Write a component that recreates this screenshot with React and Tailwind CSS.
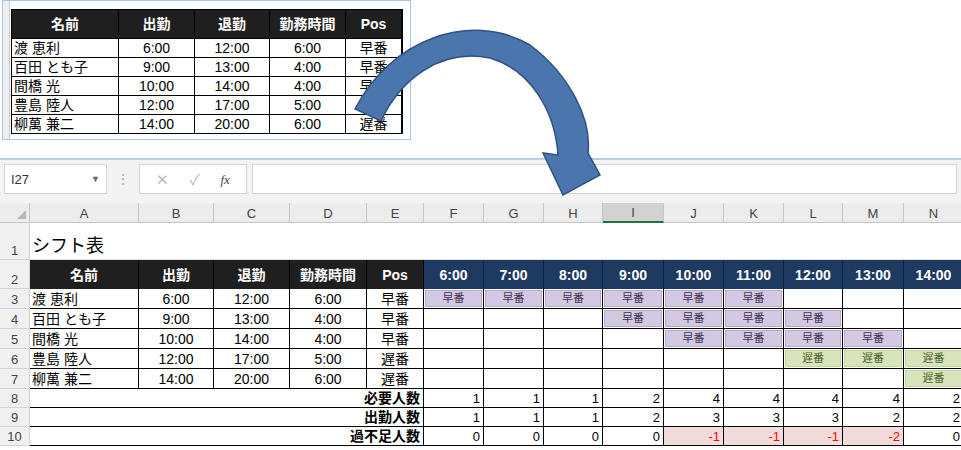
import React from "react";

const F = { fontFamily: '"Liberation Sans","Noto Sans CJK JP",sans-serif' };
const cols = "30px 109px 75px 76px 77px 57px 60px 60px 59px 61px 60px 60px 59px 61px 60px";
const rows = "20px 37px 29px 20px 20px 20px 20px 20px 19px 19px 19px";
const letters = ["A","B","C","D","E","F","G","H","I","J","K","L","M","N"];
const people = [
  ["渡 恵利","6:00","12:00","6:00","早番"],
  ["百田 とも子","9:00","13:00","4:00","早番"],
  ["間橋 光","10:00","14:00","4:00","早番"],
  ["豊島 陸人","12:00","17:00","5:00","遅番"],
  ["柳萬 兼二","14:00","20:00","6:00","遅番"],
];
const hours = ["6:00","7:00","8:00","9:00","10:00","11:00","12:00","13:00","14:00"];
const shifts = [
  [0,1,2,3,4,5],[3,4,5,6],[4,5,6,7],[6,7,8],[8],
];
const need = [1,1,1,2,4,4,4,4,2];
const have = [1,1,1,2,3,3,3,2,2];
const diff = [0,0,0,0,-1,-1,-1,-2,0];

function RowHdr({ n }) {
  return <div className="bg-[#f0f0f0] border-r border-b border-[#d4d4d4] text-[13px] leading-none text-[#444] flex items-end justify-center pb-[2px] overflow-hidden">{n}</div>;
}

export default function App() {
  return (
    <div className="relative w-[961px] h-[450px] bg-white overflow-hidden leading-none" style={F}>
      <div className="h-[158px] pl-[2px]">
        <div className="w-[409px] h-[140px] border border-[#a9c4e8] flex">
          <div className="w-[7px] bg-[#eeeeee] border-r border-[#ccc]" />
          <div className="pt-[8px] pl-[1px]">
            <div className="border border-black">
              <div className="flex bg-[#1f1f1f] text-white font-bold text-[14px] h-[28px]">
                {[["名前",107],["出勤",76],["退勤",75],["勤務時間",76],["Pos",56]].map(([t,w],i)=>(
                  <div key={i} className="flex items-center justify-center border-r border-black" style={{width:w}}>{t}</div>
                ))}
              </div>
              {people.map((p,r)=>(
                <div key={r} className="flex h-[19px] text-[14px] border-t border-black">
                  {p.map((t,i)=>(
                    <div key={i} className={`border-r border-black flex items-center ${i===0?"pl-[2px]":"justify-center"}`} style={{width:[107,76,75,76,56][i]}}>{t}</div>
                  ))}
                </div>
              ))}
            </div>
          </div>
        </div>
      </div>

      <div className="border-t-2 border-[#b7cde8]">
        <div className="bg-[#f3f3f3] h-[38px] flex items-center px-[4px]">
          <div className="w-[103px] h-[30px] bg-white border border-[#d6d6d6] flex items-center justify-between px-[6px] text-[13px] text-[#333]">
            <span>I27</span><span className="text-[9px] text-[#666]">▼</span>
          </div>
          <div className="w-[32px] text-center text-[#aaa] text-[14px]">⋮</div>
          <div className="w-[108px] h-[30px] bg-white border border-[#d6d6d6] flex items-center justify-around px-[6px] text-[#bbb] text-[15px]">
            <span>✕</span><span>✓</span><span className="text-[#444] italic text-[13px]" style={{fontFamily:'"Liberation Serif",serif'}}>fx</span>
          </div>
          <div className="ml-[5px] flex-1 h-[30px] bg-white border border-[#d6d6d6]" />
        </div>
        <div className="h-[5px] bg-[#f3f3f3]" />
        <div className="grid" style={{ gridTemplateColumns: cols, gridTemplateRows: rows }}>
          <div className="bg-[#ececec] border-r border-b border-[#c6c6c6] relative">
            <div className="absolute right-[3px] bottom-[3px] w-0 h-0 border-l-[9px] border-l-transparent border-b-[9px] border-b-[#b5b5b5]" />
          </div>
          {letters.map(l=>(
            <div key={l} className={`text-[13px] text-[#444] flex items-end justify-center pb-[2px] border-r border-b ${l==="I"?"bg-[#d2d2d2] border-b-2 border-b-[#217346] border-r-[#c6c6c6]":"bg-[#ececec] border-[#c6c6c6]"}`}>{l}</div>
          ))}

          <RowHdr n="1" />
          <div className="col-span-14 border-b border-[#e0e0e0] text-[18px] flex items-end pl-[2px] pb-[4px]">シフト表</div>

          <RowHdr n="2" />
          {["名前","出勤","退勤","勤務時間","Pos"].map((t,i)=>(
            <div key={i} className="bg-[#1f1f1f] text-white font-bold text-[14px] flex items-center justify-center border-r border-black">{t}</div>
          ))}
          {hours.map((h,i)=>(
            <div key={i} className="bg-[#1f3a60] text-white font-bold text-[14px] flex items-center justify-center border-r border-[#0f2340]">{h}</div>
          ))}

          {people.map((p,r)=>(
            <React.Fragment key={r}>
              <RowHdr n={String(r+3)} />
              {p.map((t,i)=>(
                <div key={i} className={`border-r border-b border-black text-[14px] flex items-center ${i===0?"pl-[2px]":"justify-center"}`}>{t}</div>
              ))}
              {hours.map((_,c)=>{
                const on = shifts[r].includes(c);
                const late = r>=3;
                return (
                  <div key={c} className="border-r border-b border-black p-[1px]">
                    {on && (
                      <div className={`h-full flex items-center justify-center text-[11px] ${late?"bg-[#d8e4bc] text-[#4f6228] border border-[#c4d79b]":"bg-[#d4c9e2] text-[#3f3151] border border-[#b8a9cf]"}`}>{late?"遅番":"早番"}</div>
                    )}
                  </div>
                );
              })}
            </React.Fragment>
          ))}

          {[["必要人数",need],["出勤人数",have],["過不足人数",diff]].map(([label,vals],r)=>(
            <React.Fragment key={r}>
              <RowHdr n={String(r+8)} />
              <div className="col-span-5 border-r border-b border-black font-bold text-[14px] flex items-center justify-end pr-[3px]">{label}</div>
              {vals.map((v,c)=>{
                const red = r===2 && v<0;
                return <div key={c} className={`border-r border-b border-black text-[13px] flex items-center justify-end pr-[3px] ${red?"bg-[#f2dcdb] text-[#ff0000]":""}`}>{v}</div>;
              })}
            </React.Fragment>
          ))}
        </div>
      </div>

      <svg className="absolute left-0 top-0 pointer-events-none" width="961" height="450">
        <path d="M355,109 C390,40 470,10 530,45 C570,75 592,120 588,153 L600,175 L563,195 L543,153 L558,155 C555,110 530,70 490,58 C440,48 400,80 381,121 Z" fill="#4a76ad" stroke="#2f5282" strokeWidth="1.5" />
      </svg>
    </div>
  );
}
